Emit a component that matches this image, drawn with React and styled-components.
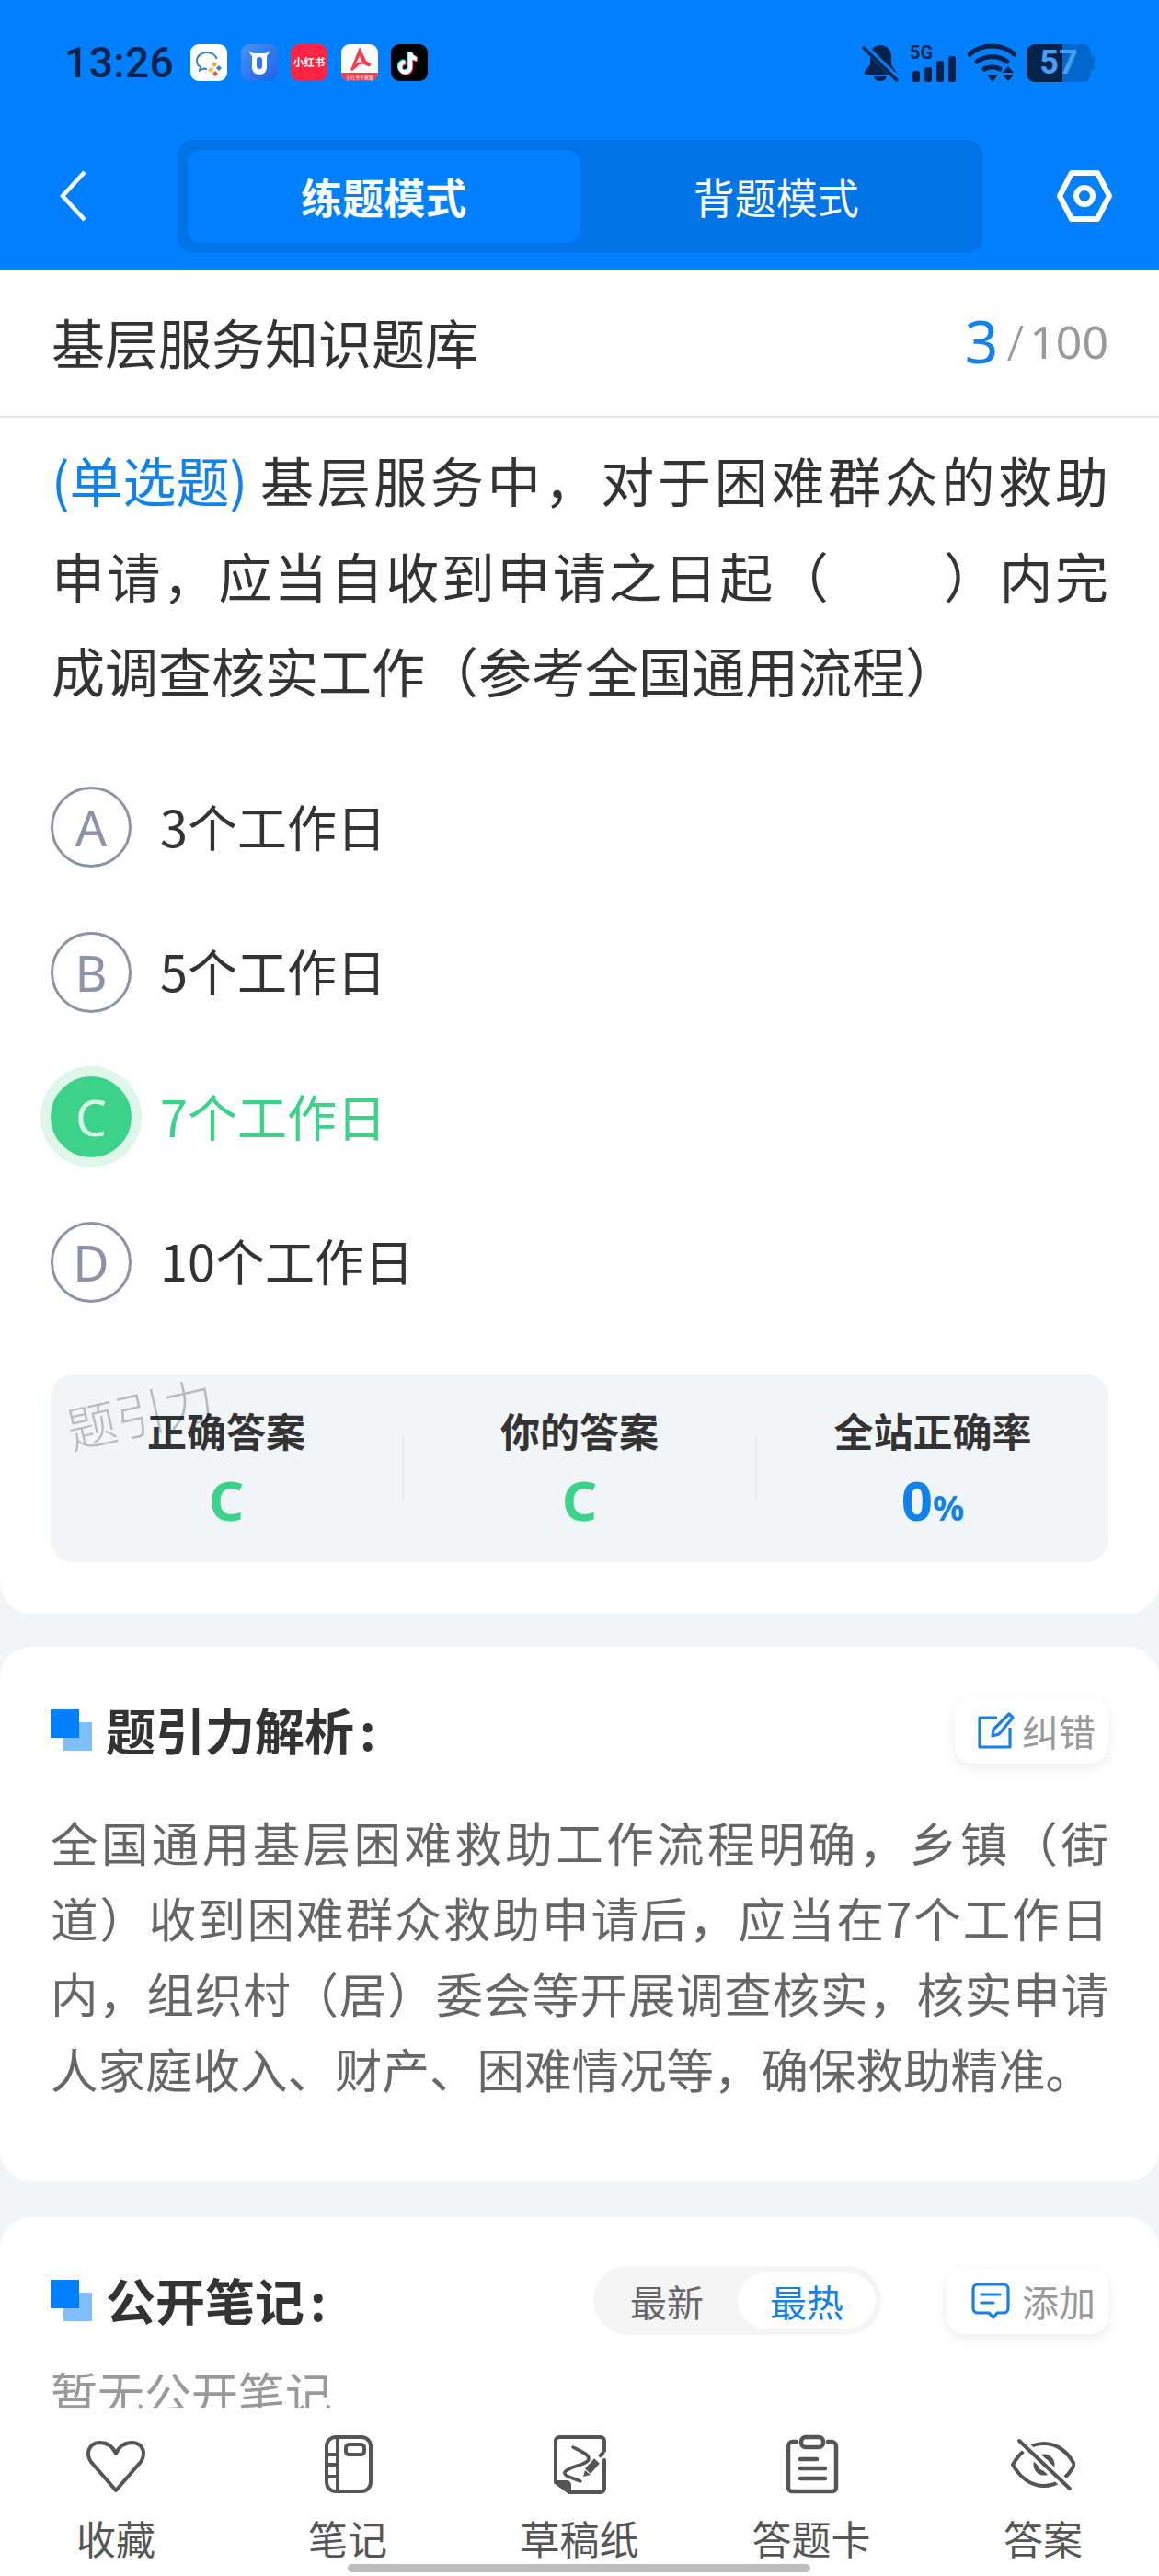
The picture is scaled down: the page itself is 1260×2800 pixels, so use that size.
import React from "react";
import styled, { createGlobalStyle } from "styled-components";

const Global = createGlobalStyle`
  html, body { margin: 0; padding: 0; background: #fff; }
  * { box-sizing: border-box; }
  body { font-family: "Noto Sans CJK SC", "Noto Sans", sans-serif; }
`;

const Page = styled.div`
  width: 1260px; height: 2800px; display: flex; flex-direction: column;
  overflow: hidden; background: #f2f5f8; position: relative;
`;
const Header = styled.header`
  flex: none; height: 294px; background: #0080ff;
`;
const StatusBar = styled.div`
  height: 136px; display: flex; align-items: center; padding: 0 70px 0 70px;
`;
const Time = styled.span`
  font-family: Roboto, "Noto Sans", sans-serif; font-size: 46px; font-weight: 500; color: #04234a;
  width: 137px; letter-spacing: 0.5px; line-height: 1;
`;
const AppIcons = styled.div` display: flex; gap: 14.6px; `;
const StatusRight = styled.div` margin-left: auto; display: flex; align-items: center; `;
const StatusSvg = styled.svg` display: block; margin-right: ${p => p.$mr || 0}px; flex: none; `;
const Battery = styled.div`
  width: 70px; height: 41px; border-radius: 9px; position: relative; margin-right: 0;
  background: linear-gradient(90deg, #04234a 0 39px, #0068cc 39px);
  display: flex; align-items: center; justify-content: center; margin-right: 4px;
  color: #4a9ff5; font-family: Roboto, sans-serif; font-weight: 700; font-size: 36px; line-height: 1;
  &::after {
    content: ""; position: absolute; right: -4px; top: 13px; width: 4px; height: 15px;
    background: #0068cc; border-radius: 0 3px 3px 0;
  }
`;
const Nav = styled.div`
  height: 154px; display: flex; align-items: center; padding-left: 65px;
`;
const Back = styled.svg` display: block; flex: none; margin-right: 96px; `;
const Segment = styled.div`
  width: 875px; height: 123px; padding: 11px; background: #0073e6; border-radius: 16px; display: flex;
`;
const ModeTab = styled.div`
  flex: 1; display: flex; align-items: center; justify-content: center; border-radius: 14px;
  font-size: 45px; color: #fff; font-weight: ${p => (p.$active ? 700 : 400)};
  background: ${p => (p.$active ? "#0080ff" : "transparent")};
`;
const Gear = styled.svg` display: block; flex: none; margin-left: 81px; `;

const Main = styled.main`
  flex: 1; min-height: 0; overflow: hidden;
`;
const Card = styled.section`
  background: #fff; border-radius: 34px; padding: 55px 55px ${p => p.$pb || 82}px; margin-top: ${p => p.$mt || 0}px;
`;
const QuestionCard = styled.section`
  background: #fff; border-radius: 0 0 34px 34px; padding-bottom: 56px;
`;
const TitleRow = styled.div`
  height: 160px; border-bottom: 2px solid #e4e4e4; display: flex; align-items: center;
  justify-content: space-between; padding: 0 55px 5px 56px;
`;
const BankTitle = styled.h1` margin: 0; font-size: 58px; font-weight: 400; color: #333; line-height: 1; `;
const Progress = styled.div` display: flex; align-items: center; color: #999; font-size: 50px; line-height: 1; font-family: "Noto Sans", sans-serif; `;
const Current = styled.span` color: #1282ea; font-size: 64px; margin-right: 9px; `;
const Slash = styled.span` font-size: 54px; margin-right: 6px; font-weight: 300; `;
const Question = styled.p`
  margin: 16px 55px 0 56px; font-size: 58px; line-height: 103.5px; color: #333; text-align: justify;
`;
const Kind = styled.span` display: inline-block; color: #1282ea; margin-right: 10px; `;
const Blank = styled.span` display: inline-block; width: 120px; `;
const Options = styled.div` margin: 40px 55px 0; `;
const Option = styled.div`
  height: 157.5px; display: flex; align-items: center; gap: 31px;
  font-size: 54px; color: ${p => (p.$right ? "#3dd28a" : "#333")};
`;
const OptionText = styled.span` margin-top: -4px; `;
const Bubble = styled.div`
  flex: none; width: 88px; height: 88px; border-radius: 50%; display: flex; align-items: center; justify-content: center;
  font-family: "Noto Sans", sans-serif; font-size: 54px; font-weight: 400; line-height: 1;
  border: 3px solid ${p => (p.$right ? "#3dd28a" : "#8e92a6")};
  color: ${p => (p.$right ? "#d5f6e5" : "#8e92a6")};
  background: ${p => (p.$right ? "#3dd28a" : "transparent")};
  box-shadow: ${p => (p.$right ? "0 0 0 11px #dff7eb" : "none")};
`;
const Stats = styled.div`
  position: relative; margin: 43px 55px 0; height: 204px; background: #f2f5f8; border-radius: 24px; display: flex;
`;
const Watermark = styled.div`
  position: absolute; left: 16px; top: 14px; font-size: 54px; line-height: 54px; font-weight: 300;
  color: rgba(0, 0, 0, 0.24); transform: rotate(-13deg); white-space: nowrap;
`;
const Stat = styled.div` flex: 1; display: flex; flex-direction: column; align-items: center; padding-top: 30px; `;
const StatLabel = styled.div` font-size: 43px; font-weight: 700; color: #333; line-height: 60px; `;
const StatValue = styled.div`
  margin-top: 11px; line-height: 70px; font-size: 60px; font-weight: 700; font-family: "Noto Sans", sans-serif;
  color: ${p => p.$color};
`;
const Percent = styled.span` font-size: 38px; `;
const StatDivider = styled.div` flex: none; width: 2px; height: 74px; margin-top: 65px; background: #e7eaef; `;

const CardHead = styled.div` display: flex; align-items: center; height: 72px; `;
const Marker = styled.span`
  position: relative; flex: none; width: 45px; height: 45px; margin-right: 15px;
  &::before { content: ""; position: absolute; right: 0; bottom: 0; width: 31px; height: 31px; background: #80bfff; }
  &::after { content: ""; position: absolute; left: 0; top: 0; width: 31px; height: 31px; background: #0080ff; }
`;
const CardTitle = styled.h2` margin: -2px 0 0; font-size: 54px; font-weight: 700; color: #333; line-height: 1; `;
const Colon = styled.span` margin-left: 6px; `;
const Tool = styled.div`
  margin-left: ${p => p.$ml || "auto"}; height: 72px; display: flex; align-items: center; gap: ${p => p.$gap}px; padding: 0 14px 0 ${p => p.$pl}px;
  background: #fff; border-radius: 20px; box-shadow: 0 4px 14px rgba(0, 0, 0, 0.08);
  font-size: 40px; color: #999;
`;
const Explain = styled.p`
  margin: 44px 0 0; font-size: 51.5px; line-height: 82px; color: #666; text-align: justify;
`;
const Sort = styled.div`
  margin-left: auto; width: 313px; height: 75px; padding: 7px 6px 7px 0; background: #f5f5f5; border-radius: 38px; display: flex;
`;
const SortItem = styled.div`
  flex: none; width: ${p => (p.$active ? 150 : 157)}px; padding-left: ${p => (p.$active ? 0 : 3)}px; display: flex; align-items: center; justify-content: center;
  border-radius: 31px; font-size: 40px;
  color: ${p => (p.$active ? "#1282ea" : "#666")};
  background: ${p => (p.$active ? "#fff" : "transparent")};
`;
const Empty = styled.div` margin-top: 38px; font-size: 51px; line-height: 50px; color: #999; height: 120px; `;

const Bottom = styled.nav`
  flex: none; height: 183px; background: #fff; display: grid; grid-template-columns: repeat(5, 1fr);
  padding-top: 28px;
`;
const BarItem = styled.div` display: flex; flex-direction: column; align-items: center; `;
const BarIcon = styled.svg` display: block; flex: none; `;
const BarLabel = styled.div` margin-top: 18px; font-size: 43px; line-height: 58px; color: #555; `;
const HomeIndicator = styled.div`
  position: absolute; left: 378px; top: 2787px; width: 503px; height: 9px; border-radius: 5px; background: #bdbdbd;
`;

const Apps = () => (
  <AppIcons>
    <StatusSvg width="40" height="40" viewBox="0 0 40 40">
      <rect width="40" height="40" rx="9" fill="#fff" />
      <path d="M18 9c-6.500 0-11 4-11 9 0 3 1.500 5.500 4 7l-1 3.500 4.500-2c1.200.3 2.400.5 3.500.5" fill="none" stroke="#3a7fc0" strokeWidth="2" />
      <path d="M18 9c5.500 0 9.500 3 10.500 7" fill="none" stroke="#3a7fc0" strokeWidth="2" />
      <path d="M26 19l3 3-3 3-3-3z" fill="#f2a33a" />
      <path d="M31 23l3 3-3 3-3-3z" fill="#3a7fc0" />
      <path d="M22 25l3 3-3 3-3-3z" fill="#e8c23a" />
      <path d="M27 29l3 3-3 3-3-3z" fill="#e45a3a" />
    </StatusSvg>
    <StatusSvg width="40" height="40" viewBox="0 0 40 40">
      <defs>
        <linearGradient id="cow" x1="0" y1="0" x2="1" y2="1">
          <stop offset="0" stopColor="#4a92f5" />
          <stop offset="1" stopColor="#1c62e8" />
        </linearGradient>
      </defs>
      <rect width="40" height="40" rx="9" fill="url(#cow)" />
      <path d="M9 7c0 3 1.500 4.500 3 5.500V25c0 5 3.500 8 8 8s8-3 8-8V12.500c1.500-1 3-2.500 3-5.500-1.500 2-3.500 3-5 3H14c-1.500 0-3.500-1-5-3z" fill="#fff" />
      <rect x="17" y="14" width="6" height="13" rx="3" fill="#2f74ec" />
    </StatusSvg>
    <StatusSvg width="40" height="40" viewBox="0 0 40 40">
      <rect width="40" height="40" rx="9" fill="#ff2442" />
      <text x="20" y="24" textAnchor="middle" fontSize="11.500" fontWeight="700" fill="#fff">小红书</text>
    </StatusSvg>
    <StatusSvg width="40" height="40" viewBox="0 0 40 40">
      <rect width="40" height="40" rx="9" fill="#fff" />
      <path d="M0 31h40v0c0 5-4 9-9 9H9c-5 0-9-4-9-9z" fill="#ef3f52" />
      <path d="M20 3l7 15 5 3c1 2-1 4-3 3l-4-2c-3-1-6 0-8 3l-5 4-2-1z" fill="#ef3f52" />
      <path d="M20 13l3 7c-3-1-6 0-8 2z" fill="#fff" opacity=".85" />
      <text x="20" y="38" textAnchor="middle" fontSize="5" fill="#fff">小红书专家版</text>
    </StatusSvg>
    <StatusSvg width="40" height="40" viewBox="0 0 40 40">
      <rect width="40" height="40" rx="9" fill="#000" />
      <g fill="none" strokeWidth="4.500">
        <path d="M21 9v16a5.500 5.500 0 1 1-5.500-5.500M21 9c.5 4 3.500 6.500 7 7" stroke="#25f4ee" transform="translate(-1 -1)" />
        <path d="M21 9v16a5.500 5.500 0 1 1-5.500-5.500M21 9c.5 4 3.500 6.500 7 7" stroke="#fe2c55" transform="translate(1 1)" />
        <path d="M21 9v16a5.500 5.500 0 1 1-5.500-5.500M21 9c.5 4 3.500 6.500 7 7" stroke="#fff" />
      </g>
    </StatusSvg>
  </AppIcons>
);

const StatusIcons = () => (
  <StatusRight>
    <StatusSvg $mr={11} width="41" height="41" viewBox="0 0 41 41">
      <path d="M20 1c-7 0-11 5-11 12v9l-6 8v3h34v-3l-5-8v-9c0-7-5-12-12-12z" fill="#04234a" />
      <path d="M13 35h14c-1 4-4 5-7 5s-6-1-7-5z" fill="#04234a" />
      <path d="M2 2l37 36" stroke="#0080ff" strokeWidth="7" />
      <path d="M1 3l38 37" stroke="#04234a" strokeWidth="3.500" />
    </StatusSvg>
    <StatusSvg $mr={12} width="51" height="42" viewBox="0 0 51 42">
      <text x="0" y="17" fontSize="20" fontWeight="700" fill="#04234a" fontFamily="Roboto, sans-serif">5G</text>
      <rect x="3" y="30" width="8" height="12" rx="2.500" fill="#04234a" />
      <rect x="16" y="26" width="8" height="16" rx="2.500" fill="#04234a" />
      <rect x="29" y="19" width="8" height="23" rx="2.500" fill="#04234a" />
      <rect x="42" y="14" width="8" height="28" rx="2.500" fill="#04234a" />
    </StatusSvg>
    <StatusSvg $mr={11} width="53" height="42" viewBox="0 0 53 42">
      <g fill="none" stroke="#04234a" strokeWidth="5" strokeLinecap="round">
        <path d="M2 12C16 0 37 0 51 12" />
        <path d="M10 20c9-7 24-7 33 0" />
        <path d="M18 28c5-3 12-3 17 0" />
      </g>
      <path d="M21 34h12l-6 8z" fill="#04234a" />
      <path d="M44 25l6 7H38z" fill="#04234a" />
      <path d="M38 34h12l-6 7z" fill="#04234a" />
    </StatusSvg>
    <Battery>57</Battery>
  </StatusRight>
);

const Heart = () => (
  <BarIcon width="70" height="66" viewBox="0 0 70 66" fill="none" stroke="#555" strokeWidth="4" strokeLinejoin="round">
    <path d="M35 62L8 31C2 22 5 11 17 10c9 0 15 5 18 12 3-7 9-12 18-12 12 1 15 12 9 21z" />
  </BarIcon>
);
const Notebook = () => (
  <BarIcon width="70" height="66" viewBox="0 0 70 66" fill="none" stroke="#555" strokeWidth="4">
    <rect x="12" y="4" width="48" height="59" rx="10" />
    <path d="M24 4v59M12 23h12M12 34h12M12 47h12" />
    <rect x="33" y="12" width="20" height="11" rx="3.500" />
  </BarIcon>
);
const Draft = () => (
  <BarIcon width="70" height="66" viewBox="0 0 70 66" fill="none" stroke="#555" strokeWidth="4" strokeLinecap="round" strokeLinejoin="round">
    <path d="M62 19V8a4 4 0 0 0-4-4H13a4 4 0 0 0-4 4v45l15 11h34a4 4 0 0 0 4-4V29" />
    <path d="M9 53h12a3 3 0 0 1 3 3v8z" fill="#555" />
    <path d="M28 15c8 4 18 8 17 13-2 7-21 7-26 14-2 5 11 7 17 10" strokeWidth="3.500" />
    <path d="M54 30L44 41" strokeWidth="8" strokeLinecap="butt" />
    <path d="M39 47l2-7 6 5z" fill="#555" stroke="none" />
    <path d="M58 24l2-2" strokeWidth="4.500" />
  </BarIcon>
);
const Clipboard = () => (
  <BarIcon width="70" height="66" viewBox="0 0 70 66" fill="none" stroke="#555" strokeWidth="4.500" strokeLinecap="round">
    <path d="M19 9h-4a5 5 0 0 0-5 5v45a4 4 0 0 0 4 4h44a4 4 0 0 0 4-4V14a5 5 0 0 0-5-5h-4" />
    <rect x="24" y="4" width="24" height="11" rx="5" />
    <path d="M23 28h18M23 38h27M23 49h27" />
  </BarIcon>
);
const EyeOff = () => (
  <BarIcon width="70" height="66" viewBox="0 0 70 66" fill="none" stroke="#555" strokeWidth="4" strokeLinecap="round">
    <path d="M2 34C10 20 22 11 36 11s26 9 33 23c-7 14-19 23-33 23S10 48 2 34z" />
    <circle cx="36" cy="34" r="9" strokeWidth="5" />
    <path d="M9 8l55 52" stroke="#fff" strokeWidth="11" />
    <path d="M9 8l55 52" />
  </BarIcon>
);

const options = [
  { key: "A", text: "3个工作日" },
  { key: "B", text: "5个工作日" },
  { key: "C", text: "7个工作日", right: true },
  { key: "D", text: "10个工作日" },
];
const bar = [
  { label: "收藏", Icon: Heart },
  { label: "笔记", Icon: Notebook },
  { label: "草稿纸", Icon: Draft },
  { label: "答题卡", Icon: Clipboard },
  { label: "答案", Icon: EyeOff },
];

export default function App() {
  return (
    <Page>
      <Global />
      <Header>
        <StatusBar>
          <Time>13:26</Time>
          <Apps />
          <StatusIcons />
        </StatusBar>
        <Nav>
          <Back width="32" height="56" viewBox="0 0 32 56" fill="none" stroke="#fff" strokeWidth="4.500">
            <path d="M27 2L3 28l24 26" />
          </Back>
          <Segment>
            <ModeTab $active>练题模式</ModeTab>
            <ModeTab>背题模式</ModeTab>
          </Segment>
          <Gear width="60" height="56" viewBox="0 0 60 56" fill="none" stroke="#fff" strokeWidth="6" strokeLinejoin="round">
            <path d="M16 3h28l13 25-13 25H16L3 28z" />
            <circle cx="30" cy="28" r="9" strokeWidth="6" />
          </Gear>
        </Nav>
      </Header>
      <Main>
        <QuestionCard>
          <TitleRow>
            <BankTitle>基层服务知识题库</BankTitle>
            <Progress>
              <Current>3</Current>
              <Slash>/</Slash>100
            </Progress>
          </TitleRow>
          <Question>
            <Kind>(单选题)</Kind>基层服务中，对于困难群众的救助申请，应当自收到申请之日起（<Blank />）内完成调查核实工作（参考全国通用流程）
          </Question>
          <Options>
            {options.map(o => (
              <Option key={o.key} $right={o.right}>
                <Bubble $right={o.right}>{o.key}</Bubble>
                <OptionText>{o.text}</OptionText>
              </Option>
            ))}
          </Options>
          <Stats>
            <Stat>
              <StatLabel>正确答案</StatLabel>
              <StatValue $color="#3dd28a">C</StatValue>
            </Stat>
            <StatDivider />
            <Stat>
              <StatLabel>你的答案</StatLabel>
              <StatValue $color="#3dd28a">C</StatValue>
            </Stat>
            <StatDivider />
            <Stat>
              <StatLabel>全站正确率</StatLabel>
              <StatValue $color="#1282ea">0<Percent>%</Percent></StatValue>
            </Stat>
            <Watermark>题引力</Watermark>
          </Stats>
        </QuestionCard>

        <Card $mt={36}>
          <CardHead>
            <Marker />
            <CardTitle>题引力解析<Colon>:</Colon></CardTitle>
            <Tool $pl={25} $gap={8}>
              <svg width="40" height="40" viewBox="0 0 40 40" fill="none" stroke="#1a80e6" strokeWidth="3.200" strokeLinejoin="round">
                <path d="M21 6H2v32h33V17" />
                <path d="M34 2l4 4-15 18-7 2 1-7z" />
              </svg>
              纠错
            </Tool>
          </CardHead>
          <Explain>全国通用基层困难救助工作流程明确，乡镇（街道）收到困难群众救助申请后，应当在7个工作日内，组织村（居）委会等开展调查核实，核实申请人家庭收入、财产、困难情况等，确保救助精准。</Explain>
        </Card>

        <Card $mt={39} $pb={60}>
          <CardHead>
            <Marker />
            <CardTitle>公开笔记<Colon>:</Colon></CardTitle>
            <Sort>
              <SortItem>最新</SortItem>
              <SortItem $active>最热</SortItem>
            </Sort>
            <Tool $ml="71px" $pl={27} $gap={13}>
              <svg width="42" height="40" viewBox="0 0 42 40" fill="none" stroke="#1a80e6" strokeWidth="3.200" strokeLinejoin="round" strokeLinecap="round">
                <path d="M7 2h28a5 5 0 0 1 5 5v21a5 5 0 0 1-5 5h-7l-4 5-5-5H7a5 5 0 0 1-5-5V7a5 5 0 0 1 5-5z" />
                <path d="M11 13h20M11 22h13" />
              </svg>
              添加
            </Tool>
          </CardHead>
          <Empty>暂无公开笔记</Empty>
        </Card>
      </Main>
      <Bottom>
        {bar.map(({ label, Icon }) => (
          <BarItem key={label}>
            <Icon />
            <BarLabel>{label}</BarLabel>
          </BarItem>
        ))}
      </Bottom>
      <HomeIndicator />
    </Page>
  );
}
